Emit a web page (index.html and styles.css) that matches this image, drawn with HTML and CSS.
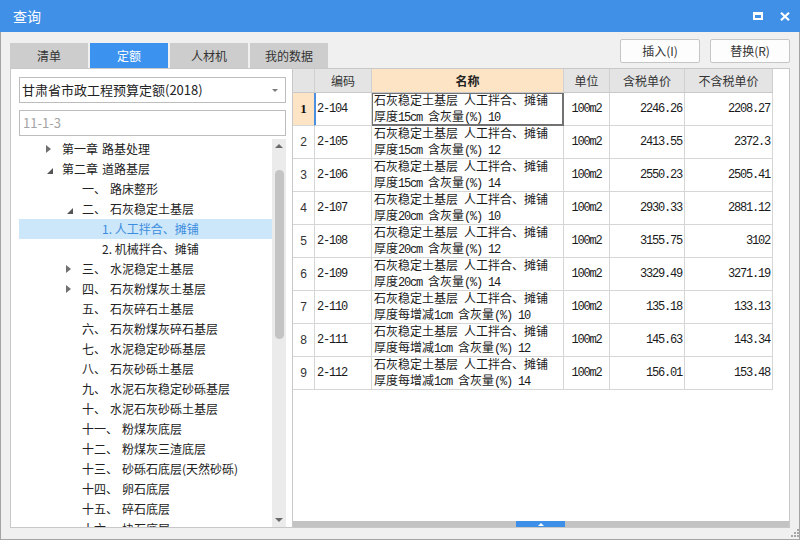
FILE: index.html
```html
<!DOCTYPE html>
<html lang="zh-CN">
<head>
<meta charset="utf-8">
<title>查询</title>
<link rel="stylesheet" href="styles.css">
</head>
<body>
<div class="window">
  <div class="titlebar">
    <span class="title">查询</span>
    <div class="winbtns">
      <svg class="ico-max" width="10" height="8" viewBox="0 0 10 8"><path fill="#fff" fill-rule="evenodd" d="M0 0H10V8H0Z M2 3H8V6H2Z"/></svg>
      <svg class="ico-close" width="10" height="9" viewBox="0 0 10 9"><path d="M1 0.8L9 8.2M9 0.8L1 8.2" stroke="#fff" stroke-width="2.2" fill="none"/></svg>
    </div>
  </div>
  <div class="body">
    <div class="toolbar">
      <div class="tabs">
        <div class="tab">清单</div>
        <div class="tab active">定额</div>
        <div class="tab">人材机</div>
        <div class="tab">我的数据</div>
      </div>
      <div class="actions">
        <button class="btn">插入(I)</button>
        <button class="btn">替换(R)</button>
      </div>
    </div>
    <div class="content">
      <div class="left">
        <div class="select">
          <span class="select-text">甘肃省市政工程预算定额(2018)</span>
          <span class="caret"></span>
        </div>
        <div class="search">11-1-3</div>
        <div class="tree-wrap">
          <div class="tree">
            <div class="row l1"><span class="ar"><i class="tri-c"></i></span><span class="n">第一章</span>路基处理</div>
            <div class="row l1"><span class="ar"><i class="tri-e"></i></span><span class="n">第二章</span>道路基层</div>
            <div class="row l2"><span class="ar"></span><span class="n">一、</span>路床整形</div>
            <div class="row l2"><span class="ar"><i class="tri-e"></i></span><span class="n">二、</span>石灰稳定土基层</div>
            <div class="row l3 sel"><span class="ar"></span>1. 人工拌合、摊铺</div>
            <div class="row l3"><span class="ar"></span>2. 机械拌合、摊铺</div>
            <div class="row l2"><span class="ar"><i class="tri-c"></i></span><span class="n">三、</span>水泥稳定土基层</div>
            <div class="row l2"><span class="ar"><i class="tri-c"></i></span><span class="n">四、</span>石灰粉煤灰土基层</div>
            <div class="row l2"><span class="ar"></span><span class="n">五、</span>石灰碎石土基层</div>
            <div class="row l2"><span class="ar"></span><span class="n">六、</span>石灰粉煤灰碎石基层</div>
            <div class="row l2"><span class="ar"></span><span class="n">七、</span>水泥稳定砂砾基层</div>
            <div class="row l2"><span class="ar"></span><span class="n">八、</span>石灰砂砾土基层</div>
            <div class="row l2"><span class="ar"></span><span class="n">九、</span>水泥石灰稳定砂砾基层</div>
            <div class="row l2"><span class="ar"></span><span class="n">十、</span>水泥石灰砂砾土基层</div>
            <div class="row l2"><span class="ar"></span><span class="n">十一、</span>粉煤灰底层</div>
            <div class="row l2"><span class="ar"></span><span class="n">十二、</span>粉煤灰三渣底层</div>
            <div class="row l2"><span class="ar"></span><span class="n">十三、</span>砂砾石底层(天然砂砾)</div>
            <div class="row l2"><span class="ar"></span><span class="n">十四、</span>卵石底层</div>
            <div class="row l2"><span class="ar"></span><span class="n">十五、</span>碎石底层</div>
            <div class="row l2"><span class="ar"></span><span class="n">十六、</span>块石底层</div>
          </div>
          <div class="vscroll">
            <div class="vbtn"><i class="up"></i></div>
            <div class="vthumb"></div>
            <div class="vfill"></div>
            <div class="vbtn"><i class="down"></i></div>
          </div>
        </div>
      </div>
      <div class="right">
        <div class="grid">
          <div class="h"></div><div class="h">编码</div><div class="h hname">名称</div><div class="h">单位</div><div class="h">含税单价</div><div class="h">不含税单价</div>

          <div class="c rn cur">1</div><div class="c code curcode"><span class="m">2-104</span></div><div class="c name focus"><span>石灰稳定土基层<span class="m"> </span>人工拌合、摊铺</span><span>厚度<span class="m">15cm </span>含灰量<span class="m">(%) 10</span></span></div><div class="c unit m">100m2</div><div class="c num m">2246.26</div><div class="c num m">2208.27</div>

          <div class="c rn">2</div><div class="c code"><span class="m">2-105</span></div><div class="c name"><span>石灰稳定土基层<span class="m"> </span>人工拌合、摊铺</span><span>厚度<span class="m">15cm </span>含灰量<span class="m">(%) 12</span></span></div><div class="c unit m">100m2</div><div class="c num m">2413.55</div><div class="c num m">2372.3</div>

          <div class="c rn">3</div><div class="c code"><span class="m">2-106</span></div><div class="c name"><span>石灰稳定土基层<span class="m"> </span>人工拌合、摊铺</span><span>厚度<span class="m">15cm </span>含灰量<span class="m">(%) 14</span></span></div><div class="c unit m">100m2</div><div class="c num m">2550.23</div><div class="c num m">2505.41</div>

          <div class="c rn">4</div><div class="c code"><span class="m">2-107</span></div><div class="c name"><span>石灰稳定土基层<span class="m"> </span>人工拌合、摊铺</span><span>厚度<span class="m">20cm </span>含灰量<span class="m">(%) 10</span></span></div><div class="c unit m">100m2</div><div class="c num m">2930.33</div><div class="c num m">2881.12</div>

          <div class="c rn">5</div><div class="c code"><span class="m">2-108</span></div><div class="c name"><span>石灰稳定土基层<span class="m"> </span>人工拌合、摊铺</span><span>厚度<span class="m">20cm </span>含灰量<span class="m">(%) 12</span></span></div><div class="c unit m">100m2</div><div class="c num m">3155.75</div><div class="c num m">3102</div>

          <div class="c rn">6</div><div class="c code"><span class="m">2-109</span></div><div class="c name"><span>石灰稳定土基层<span class="m"> </span>人工拌合、摊铺</span><span>厚度<span class="m">20cm </span>含灰量<span class="m">(%) 14</span></span></div><div class="c unit m">100m2</div><div class="c num m">3329.49</div><div class="c num m">3271.19</div>

          <div class="c rn">7</div><div class="c code"><span class="m">2-110</span></div><div class="c name"><span>石灰稳定土基层<span class="m"> </span>人工拌合、摊铺</span><span>厚度每增减<span class="m">1cm </span>含灰量<span class="m">(%) 10</span></span></div><div class="c unit m">100m2</div><div class="c num m">135.18</div><div class="c num m">133.13</div>

          <div class="c rn">8</div><div class="c code"><span class="m">2-111</span></div><div class="c name"><span>石灰稳定土基层<span class="m"> </span>人工拌合、摊铺</span><span>厚度每增减<span class="m">1cm </span>含灰量<span class="m">(%) 12</span></span></div><div class="c unit m">100m2</div><div class="c num m">145.63</div><div class="c num m">143.34</div>

          <div class="c rn">9</div><div class="c code"><span class="m">2-112</span></div><div class="c name"><span>石灰稳定土基层<span class="m"> </span>人工拌合、摊铺</span><span>厚度每增减<span class="m">1cm </span>含灰量<span class="m">(%) 14</span></span></div><div class="c unit m">100m2</div><div class="c num m">156.01</div><div class="c num m">153.48</div>
        </div>
        <div class="spacer"></div>
        <div class="hscroll"><div class="hthumb"><i class="hup"></i></div></div>
      </div>
    </div>
  </div>
  <svg class="grip" width="9" height="9" viewBox="0 0 9 9">
    <g fill="#a6a6a6"><rect x="7" y="1" width="2" height="2"/><rect x="4" y="4" width="2" height="2"/><rect x="7" y="4" width="2" height="2"/><rect x="1" y="7" width="2" height="2"/><rect x="4" y="7" width="2" height="2"/><rect x="7" y="7" width="2" height="2"/></g>
  </svg>
</div>
</body>
</html>
```

FILE: styles.css
```css
* { box-sizing: border-box; margin: 0; padding: 0; }
html, body { width: 800px; height: 540px; overflow: hidden; }
body {
  font-family: "Noto Sans CJK SC", "Noto Sans", sans-serif;
  font-size: 12px;
  color: #222;
  background: #f0f0f0;
}
.window {
  width: 800px;
  height: 540px;
  display: flex;
  flex-direction: column;
  position: relative;
}
.titlebar {
  height: 32px;
  flex: none;
  background: #4190e7;
  color: #fff;
  display: flex;
  align-items: center;
  padding: 0 10px 0 13px;
}
.title { flex: 1; font-size: 14px; line-height: 20px; }
.winbtns { display: flex; align-items: center; gap: 17px; }
.ico-max { display: block; }
.ico-close { display: block; }

.body {
  flex: 1;
  min-height: 0;
  background: #f0f0f0;
  border: 1px solid #a5a5a5;
  border-top: 0;
  padding: 0 9px 11px 9px;
  display: flex;
  flex-direction: column;
}
.toolbar {
  height: 36px;
  flex: none;
  display: flex;
  justify-content: space-between;
}
.tabs { display: flex; gap: 2px; align-self: flex-end; }
.tab {
  width: 78px;
  height: 25px;
  line-height: 25px;
  text-align: center;
  background: #cdcdcd;
  color: #333;
  font-size: 12px;
}
.tab.active { background: #3b93ef; color: #fff; }
.actions { display: flex; gap: 10px; padding-top: 7px; }
.btn {
  width: 80px;
  height: 24px;
  border: 1px solid #c6c6c6;
  border-radius: 2px;
  background: #fdfdfd;
  font-family: inherit;
  font-size: 12px;
  color: #333;
  line-height: 22px;
  text-align: center;
}

.content {
  flex: 1;
  min-height: 0;
  display: flex;
  background: #fff;
  border: 1px solid #c8c8c8;
}
.left {
  width: 282px;
  flex: none;
  border-right: 1px solid #c8c8c8;
  padding: 8px 6px 0 8px;
  display: flex;
  flex-direction: column;
}
.select {
  height: 26px;
  flex: none;
  border: 1px solid #bdbdbd;
  display: flex;
  align-items: center;
  padding: 0 7px 0 2px;
}
.select-text { flex: 1; font-size: 13px; line-height: 20px; color: #222; }
.caret {
  width: 0; height: 0;
  border-left: 3px solid transparent;
  border-right: 3px solid transparent;
  border-top: 3px solid #7a7a7a;
}
.search {
  height: 26px;
  flex: none;
  margin-top: 7px;
  border: 1px solid #bdbdbd;
  padding-left: 3px;
  font-size: 13px;
  line-height: 24px;
  color: #a3a3a3;
}
.tree-wrap {
  flex: 1;
  min-height: 0;
  margin-top: 3px;
  display: flex;
}
.tree { flex: 1; overflow: hidden; }
.row {
  height: 20px;
  line-height: 20px;
  display: flex;
  align-items: center;
  white-space: nowrap;
  color: #222;
}
.row.l1 { padding-left: 27px; }
.row.l2 { padding-left: 47px; }
.row.l3 { padding-left: 67px; }
.row.sel { background: #cce6fa; color: #3b8de0; }
.ar {
  width: 16px;
  height: 20px;
  flex: none;
  display: flex;
  align-items: center;
}
.n { margin-right: 4px; }
.tri-c {
  width: 0; height: 0;
  border-left: 5px solid #707070;
  border-top: 4px solid transparent;
  border-bottom: 4px solid transparent;
}
.tri-e {
  width: 0; height: 0;
  margin: 3px 0 0 1px;
  border-bottom: 6px solid #555;
  border-left: 6px solid transparent;
}
.vscroll {
  width: 14px;
  flex: none;
  background: #ebebeb;
  display: flex;
  flex-direction: column;
  align-items: center;
}
.vbtn {
  height: 14px;
  width: 14px;
  flex: none;
  display: flex;
  align-items: center;
  justify-content: center;
}
.up {
  width: 0; height: 0;
  border-left: 4px solid transparent;
  border-right: 4px solid transparent;
  border-bottom: 4px solid #6a6a6a;
}
.down {
  width: 0; height: 0;
  border-left: 4px solid transparent;
  border-right: 4px solid transparent;
  border-top: 4px solid #6a6a6a;
}
.vthumb {
  width: 9px;
  height: 169px;
  margin-top: 17px;
  flex: none;
  border-radius: 5px;
  background: #c4c4c4;
}
.vfill { flex: 1; }

.right {
  flex: 1;
  display: flex;
  flex-direction: column;
}
.grid {
  display: grid;
  width: 480px;
  grid-template-columns: 22px 57px 192px 46px 75px 88px;
  grid-auto-rows: 33px;
  grid-template-rows: 24px;
}
.h {
  background: #e4e4e4;
  border-right: 1px solid #d0d0d0;
  border-bottom: 1px solid #c9c9c9;
  text-align: center;
  line-height: 23px;
  color: #333;
}
.h.hname { background: #fde4c5; font-weight: bold; color: #222; }
.c {
  border-right: 1px solid #d6d6d6;
  border-bottom: 1px solid #d6d6d6;
  display: flex;
  align-items: center;
  color: #1a1a1a;
  white-space: nowrap;
}
.m {
  font-family: "Liberation Mono", "Noto Sans CJK SC", monospace;
  font-size: 12px;
  letter-spacing: -1.2px;
}
.rn {
  justify-content: center;
  font-family: "Liberation Sans", sans-serif;
  font-size: 12px;
  color: #333;
}
.rn.cur {
  background: #fde4c5;
  font-family: "Liberation Serif", serif;
  font-weight: bold;
  font-size: 13px;
  color: #111;
  border-right-color: #4a8fe2;
}
.code { padding-left: 2px; }
.curcode { box-shadow: inset 1px 0 0 #4a8fe2; }
.name {
  flex-direction: column;
  align-items: flex-start;
  justify-content: center;
  padding: 0 2px 0 2px;
  line-height: 13px;
}
.name.focus {
  border-right: 2px solid #727272;
  border-bottom: 2px solid #727272;
  box-shadow: inset 1px 1px 0 #727272;
}
.unit { justify-content: center; }
.num { justify-content: flex-end; padding-right: 2px; }
.spacer { flex: 1; }
.hscroll {
  height: 6px;
  flex: none;
  background: #c3c3c3;
  display: flex;
}
.hthumb {
  width: 49px;
  height: 6px;
  margin-left: 223px;
  background: #3d8fe8;
  display: flex;
  justify-content: center;
  align-items: center;
}
.hup {
  width: 0; height: 0;
  border-left: 3px solid transparent;
  border-right: 3px solid transparent;
  border-bottom: 3px solid #fff;
}
.grip {
  position: absolute;
  left: 790px;
  top: 528px;
}
```
